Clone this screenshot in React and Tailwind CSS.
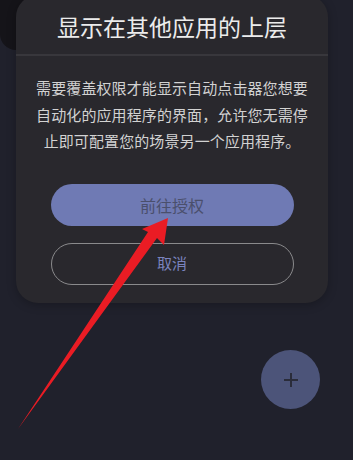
import React from 'react'

const cjk = { fontFamily: '"Noto Sans CJK SC", "Noto Sans", sans-serif' }

export default function App() {
  return (
    <div className="relative w-[353px] h-[460px] overflow-hidden bg-[#20212c]" style={cjk}>
      {/* dark panel peeking behind the dialog */}
      <div className="absolute left-0 top-[-20px] w-[40px] h-[70px] rounded-bl-[16px] bg-[#151419]" />

      {/* dialog */}
      <div className="relative ml-[16px] mt-[-5px] w-[312px] rounded-[22px] bg-[#29282d] shadow-[0_2px_10px_rgba(0,0,0,0.25)]">
        <div className="h-[59px] flex items-center justify-center pt-[4px] text-[23px] text-[#ececec]">
          显示在其他应用的上层
        </div>
        <div className="h-[2px] bg-[#38373c]" />
        <p className="mx-auto mt-[19px] w-[290px] text-center text-[15px] tracking-[0.1px] leading-[26.5px] text-[#d2d2d2]">
          需要覆盖权限才能显示自动点击器您想要
          <br />
          自动化的应用程序的界面，允许您无需停
          <br />
          止即可配置您的场景另一个应用程序。
        </p>
        <div className="mt-[29px] flex flex-col items-center gap-[17px] pb-[18px]">
          <button className="w-[243px] h-[42px] rounded-full bg-[#6f7ab4] text-[16px] text-[#4a4f6c]">
            前往授权
          </button>
          <button className="w-[243px] h-[42px] rounded-full border-[1.5px] border-[#8a8a8c] text-[15px] text-[#7a83bd]">
            取消
          </button>
        </div>
      </div>

      {/* floating action button */}
      <div className="absolute left-[261px] top-[350px] w-[59px] h-[59px] rounded-full bg-[#4c5479] flex items-center justify-center">
        <svg width="16" height="16" viewBox="0 0 16 16">
          <path d="M8 1v14M1 8h14" stroke="#2a2c3a" strokeWidth="2" />
        </svg>
      </div>

      {/* red annotation arrow */}
      <svg className="absolute inset-0 pointer-events-none" width="353" height="460" viewBox="0 0 353 460">
        <polygon
          points="168,218 164,245 157,238 18,429 148,232 142,229"
          fill="#ea1c24"
        />
      </svg>
    </div>
  )
}
